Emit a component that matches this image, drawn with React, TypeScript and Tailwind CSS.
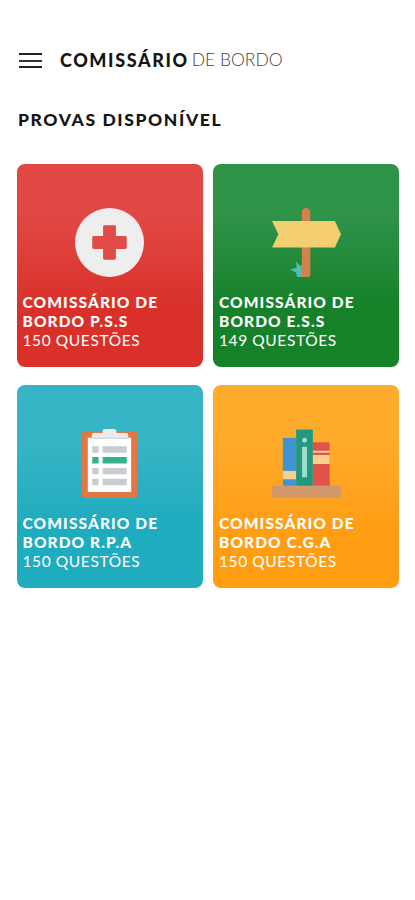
import type { ReactNode } from "react";

type Exam = {
  lines: [string, string];
  questions: number;
  color: string;
  icon: ReactNode;
};

const iconProps = {
  viewBox: "0 0 70 70",
  className: "mx-auto size-[69px]",
  "aria-hidden": true,
};

const FirstAidIcon = () => (
  <svg {...iconProps}>
    <circle cx="35" cy="35" r="35" fill="#eeeeee" />
    <path
      d="M30 17.5h10a1.5 1.5 0 0 1 1.5 1.5v9.5H51a1.5 1.5 0 0 1 1.5 1.5v10a1.5 1.5 0 0 1-1.5 1.5h-9.5V51a1.5 1.5 0 0 1-1.5 1.5H30a1.5 1.5 0 0 1-1.5-1.5v-9.5H19a1.5 1.5 0 0 1-1.5-1.5V30a1.5 1.5 0 0 1 1.5-1.5h9.5V19a1.5 1.5 0 0 1 1.5-1.5Z"
      fill="#e04b48"
    />
  </svg>
);

const SignpostIcon = () => (
  <svg {...iconProps}>
    <path d="M30.3 4.3a4.3 4.3 0 0 1 8.6 0V68a2 2 0 0 1-2 2h-6.6Z" fill="#d5814b" />
    <path d="M0 13.3h63.8L70 26.6 63.8 40H0l6.5-13.4Z" fill="#f3ce70" />
    <path
      d="M30.3 57.5 28.3 58.5 24.5 54 25 60.5 18 62.5 24.3 65.5 25.5 70h4.8Z"
      fill="#4dbfac"
    />
  </svg>
);

const ClipboardIcon = () => (
  <svg {...iconProps}>
    <rect x="7" y="3" width="56" height="67" rx="1.5" fill="#e27743" />
    <path d="M13 9h44v55H13Z" fill="#fff" />
    <path
      d="M28 2a2 2 0 0 1 2-2h10a2 2 0 0 1 2 2v2h10a2 2 0 0 1 2 2v4H17V6a2 2 0 0 1 2-2h9Z"
      fill="#e9ecee"
    />
    <path d="M17 8.5h37V10H17Z" fill="#cfd5d8" />
    <path
      d="M17.5 17.5H24V24h-6.5ZM28 17.5h24.500V24H28ZM17.5 39.5H24V46h-6.5ZM28 39.5h24.500V46H28ZM17.5 50.5H24V57h-6.5ZM28 50.5h24.500V57H28Z"
      fill="#c9cdd1"
    />
    <path d="M17.5 28.5H24V35h-6.5ZM28 28.5h24.500V35H28Z" fill="#35b28a" />
  </svg>
);

const BooksIcon = () => (
  <svg {...iconProps}>
    <rect x="0" y="57.5" width="70" height="12.5" rx="2" fill="#d3986a" />
    <path d="M11 9h13.5v48.5H11Z" fill="#3f94d1" />
    <path d="M11 42.5h13.5V51H11Z" fill="#f6cf92" />
    <path d="M24.5.5h17v57h-17Z" fill="#239880" />
    <circle cx="33" cy="11.5" r="2.5" fill="#9edccd" />
    <path d="M30.5 18h5v31h-5Z" fill="#9edccd" />
    <path d="M41.5 13.5h17v44h-17Z" fill="#e0524a" />
    <path d="M41.5 22h17v2h-17ZM41.5 26.5h17v9h-17Z" fill="#f8d08f" />
  </svg>
);

const exams: Exam[] = [
  {
    lines: ["COMISSÁRIO DE", "BORDO P.S.S"],
    questions: 150,
    color: "from-[#e14843] to-[#da302a]",
    icon: <FirstAidIcon />,
  },
  {
    lines: ["COMISSÁRIO DE", "BORDO E.S.S"],
    questions: 149,
    color: "from-[#2f9249] to-[#158129]",
    icon: <SignpostIcon />,
  },
  {
    lines: ["COMISSÁRIO DE", "BORDO R.P.A"],
    questions: 150,
    color: "from-[#37b5c6] to-[#1eacbe]",
    icon: <ClipboardIcon />,
  },
  {
    lines: ["COMISSÁRIO DE", "BORDO C.G.A"],
    questions: 150,
    color: "from-[#ffab2c] to-[#ff9e13]",
    icon: <BooksIcon />,
  },
];

const ExamCard = ({ exam }: { exam: Exam }) => {
  return (
    <button
      type="button"
      className={`flex flex-col justify-start h-[203px] rounded-lg bg-linear-to-b from-25% to-70% px-1.5 pt-[44px] text-left text-white cursor-pointer ${exam.color}`}
    >
      {exam.icon}
      <span className="mt-[16px] text-[15.5px] leading-[19px] font-black tracking-[1.1px] whitespace-nowrap">
        {exam.lines[0]}
        <br />
        {exam.lines[1]}
      </span>
      <span className="text-[15.5px] leading-[19px] tracking-[0.6px] whitespace-nowrap">
        {exam.questions} QUESTÕES
      </span>
    </button>
  );
};

const App = () => {
  return (
    <main className="min-h-screen bg-white px-4 pt-[45px] font-['Lato','Open_Sans',sans-serif] text-[#151515]">
      <header className="flex items-center h-[30px] pl-[3px]">
        <button type="button" aria-label="Menu" className="flex flex-col gap-[4.5px] w-[23px] mt-px cursor-pointer">
          <span className="h-0.5 bg-[#222]"></span>
          <span className="h-0.5 bg-[#333]"></span>
          <span className="h-0.5 bg-[#222]"></span>
        </button>
        <h1 className="ml-[18px] flex gap-[3px] leading-[30px] whitespace-nowrap">
          <span className="text-[18px] font-black tracking-[1.6px]">COMISSÁRIO</span>
          <span className="text-[17.5px] font-light text-[#444]">DE BORDO</span>
        </h1>
      </header>
      <h2 className="mt-[34px] ml-[2px] text-[17.5px] leading-[22px] font-black tracking-[1.6px] whitespace-nowrap">
        PROVAS DISPONÍVEL
      </h2>
      <section className="mt-[33px] ml-[0.5px] grid grid-cols-[186px_186px] gap-x-[10.5px] gap-y-[18px]">
        {exams.map((exam) => (
          <ExamCard key={exam.lines[1]} exam={exam} />
        ))}
      </section>
    </main>
  );
};

export default App;
